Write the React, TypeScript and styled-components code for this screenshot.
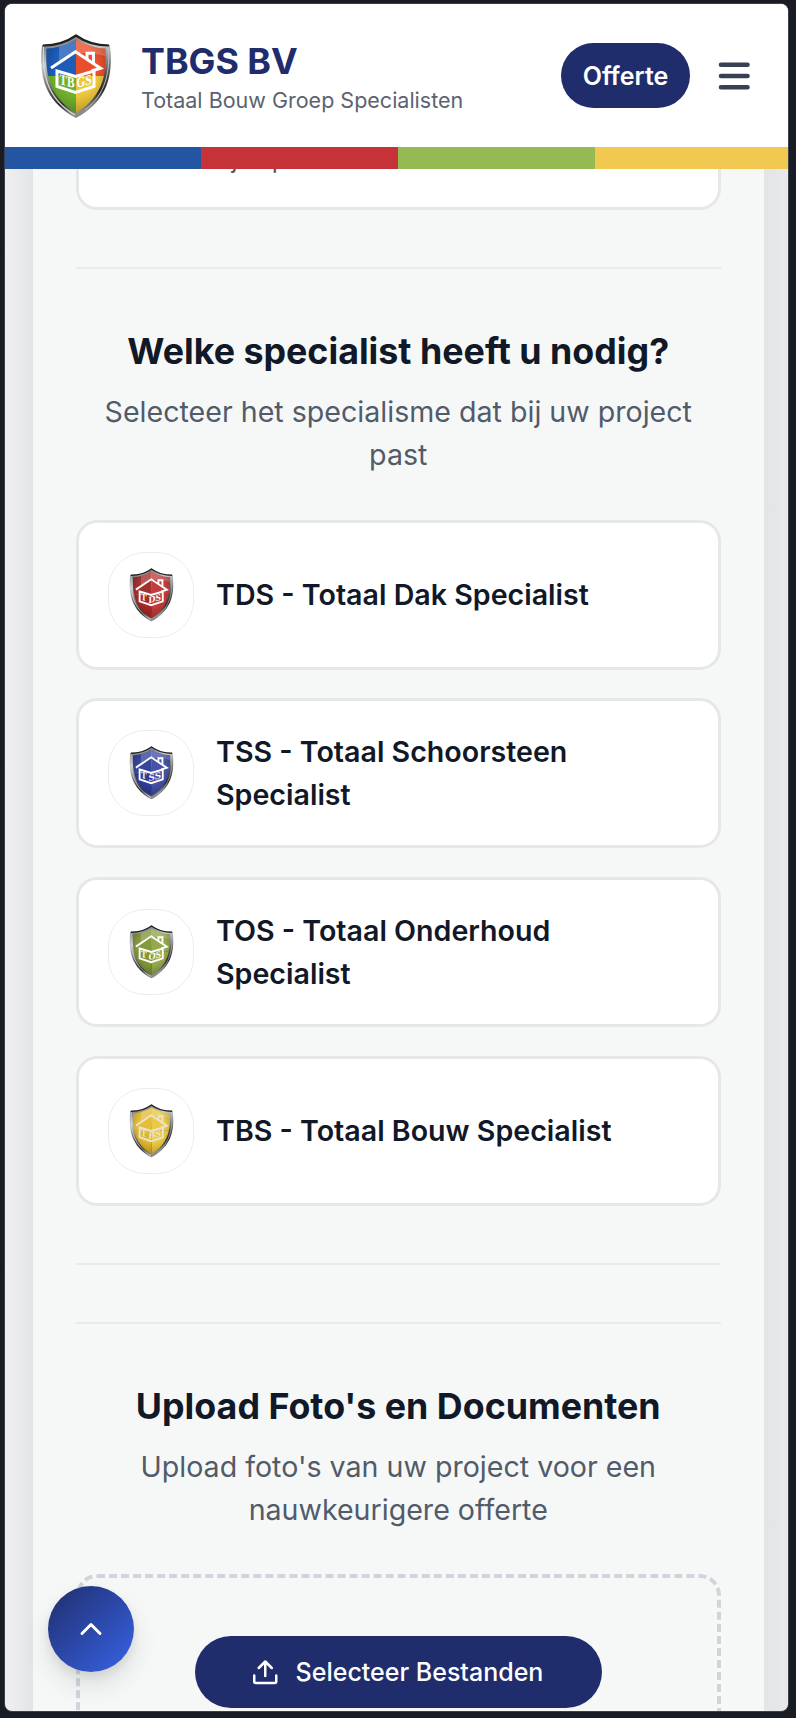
import React from 'react';
import styled, { createGlobalStyle } from 'styled-components';

const Global = createGlobalStyle`
  * { box-sizing: border-box; }
  body { margin: 0; background: #191c24; font-family: Inter, "Liberation Sans", sans-serif; }
  h1, h2, h3, p { margin: 0; }
  button { font: inherit; border: 0; padding: 0; cursor: pointer; }
`;

const Device = styled.div`
  width: 796px;
  height: 1718px;
  padding: 3px 6px 6px 4px;
  overflow: hidden;
`;

const Screen = styled.div`
  position: relative;
  width: 785px;
  height: 1709px;
  border: 1.5px solid #3b404b;
  border-radius: 8px;
  overflow: hidden;
  background: linear-gradient(90deg, #f0f0f2 0, #e3e4e6 28px, #e3e4e6 758px, #e9e9eb 100%);
`;

const Header = styled.header`
  position: relative;
  z-index: 2;
  background: #fff;
`;

const Bar = styled.div`
  height: 143px;
  display: flex;
  align-items: center;
  padding: 0 31px 0 35px;
`;

const Brand = styled.div`
  flex: 1;
  padding: 4px 0 0 29px;
`;

const BrandName = styled.h1`
  font-size: 35.8px;
  line-height: 44px;
  font-weight: 700;
  color: #202c6c;
`;

const Tagline = styled.p`
  font-size: 21.5px;
  line-height: 34px;
  color: #5b6370;
`;

const QuoteButton = styled.button`
  width: 129px;
  height: 65px;
  border-radius: 33px;
  background: #202d6c;
  color: #fff;
  font-size: 25px;
  font-weight: 600;
`;

const MenuButton = styled.button`
  margin-left: 21px;
  width: 46px;
  height: 46px;
  background: none;
`;

const Stripe = styled.div`
  display: grid;
  grid-template-columns: 196px 197px 197px 1fr;
  height: 21.5px;
`;

const StripePart = styled.div<{ $color: string }>`
  background: ${(p) => p.$color};
`;

const Content = styled.main`
  margin: -53.5px 24.5px 0 28px;
  height: 1620px;
  padding: 0 43px;
  background: #f6f8f8;
`;

const Card = styled.div`
  display: flex;
  align-items: center;
  height: 150px;
  padding: 0 28px 0 29px;
  border: 3.5px solid #e5e7eb;
  border-radius: 21px;
  background: #fff;
`;

const PreviousCard = styled(Card)`
  height: 94.5px;
  align-items: flex-start;
  padding: 26px 0 0 88px;
  border-top: 0;
  border-radius: 0 0 21px 21px;
  font-size: 25.1px;
  line-height: 36px;
  color: #4b5563;
`;

const Divider = styled.hr`
  margin: 57px 0 0;
  border: 0;
  height: 2px;
  background: #e8eaed;
`;

const Section = styled.section`
  padding-top: 57.5px;
  text-align: center;
`;

const Title = styled.h2`
  font-size: 35.8px;
  line-height: 50px;
  font-weight: 700;
  color: #111827;
`;

const Lead = styled.p`
  margin-top: 14px;
  font-size: 28.6px;
  line-height: 43px;
  color: #525b69;
`;

const Cards = styled.div`
  display: flex;
  flex-direction: column;
  gap: 28.8px;
  margin-top: 43.6px;
  text-align: left;
`;

const Badge = styled.div`
  flex: none;
  display: grid;
  place-items: center;
  width: 86px;
  height: 86px;
  border: 1.8px solid #e7eef3;
  border-radius: 37px;
`;

const CardLabel = styled.h3`
  padding-left: 22px;
  font-size: 28.6px;
  line-height: 43px;
  font-weight: 600;
  color: #111827;
`;

const DropZone = styled.div`
  display: flex;
  justify-content: center;
  margin-top: 43px;
  height: 240px;
  padding-top: 57.5px;
  border: 4px dashed #d1d5db;
  border-radius: 21px;
`;

const UploadButton = styled.button`
  display: flex;
  align-items: center;
  justify-content: center;
  gap: 18px;
  width: 407px;
  height: 72px;
  border-radius: 36px;
  background: #202d6c;
  color: #fff;
  font-size: 25px;
  font-weight: 500;
`;

const ScrollTop = styled.button`
  position: absolute;
  z-index: 3;
  left: 42.5px;
  bottom: 39.5px;
  width: 86px;
  height: 86px;
  display: grid;
  place-items: center;
  border-radius: 50%;
  background: linear-gradient(135deg, #202d6c, #3764e6);
  box-shadow: 0 14px 28px rgba(0, 0, 0, 0.1), 0 5px 10px rgba(0, 0, 0, 0.08);
`;

const LogoSlot = styled.div`
  display: flex;
  padding-top: 2px;
`;

type Letters = { text: string; x: number; y: number; width: number };

type ShieldProps = {
  id: string;
  width: number;
  height: number;
  colors: [string, string, string, string];
  left: Letters;
  right: Letters;
  ink?: string;
};

const OUTLINE = 'M36 1 C26 8 14 11 2 11 C-1 40 3 66 36 84 C69 66 73 40 70 11 C58 11 46 8 36 1Z';
const FACE = 'M36 5 C27 11 17 14 6.500 14.500 C5 39 9 63 36 79 C63 63 67 39 65.500 14.500 C55 14 45 11 36 5Z';

function Shield({ id, width, height, colors, left, right, ink = '#fff' }: ShieldProps) {
  const [tl, tr, bl, br] = colors;
  return (
    <svg width={width} height={height} viewBox="0 0 72 85" preserveAspectRatio="none">
      <defs>
        <linearGradient id={`${id}-rim`} x1="0" y1="0" x2="0.3" y2="1">
          <stop offset="0" stopColor="#171717" />
          <stop offset="0.12" stopColor="#77797a" />
          <stop offset="0.35" stopColor="#c9cbcc" />
          <stop offset="0.7" stopColor="#4c4c4c" />
          <stop offset="0.85" stopColor="#292929" />
          <stop offset="1" stopColor="#8b8b8b" />
        </linearGradient>
        <radialGradient id={`${id}-shade`} cx="0.5" cy="0.42" r="0.62">
          <stop offset="0.5" stopColor="#000" stopOpacity="0" />
          <stop offset="1" stopColor="#000" stopOpacity="0.34" />
        </radialGradient>
        <clipPath id={`${id}-clip`}>
          <path d={FACE} />
        </clipPath>
      </defs>
      <path d={OUTLINE} fill={`url(#${id}-rim)`} />
      <path d="M3.500 12.500 C2 38 6 64 35 81" fill="none" stroke="#d4d6d8" strokeWidth="1.200" />
      <path d="M68.500 13 C70 38 66 60 45 76" fill="none" stroke="#c4c6c8" strokeWidth="0.900" />
      <path d="M3 11.500 C15 11.500 27 8 36 1.500 C45 8 57 11.500 69 11.500" fill="none" stroke="#202122" strokeWidth="2.200" />
      <g clipPath={`url(#${id}-clip)`}>
        <rect width="36" height="42" fill={tl} />
        <rect x="36" width="36" height="42" fill={tr} />
        <rect y="42" width="36" height="43" fill={bl} />
        <rect x="36" y="42" width="36" height="43" fill={br} />
        <path d="M19 0 H72 V25 C58 18 32 15 19 28Z" fill="#fff" opacity="0.2" />
        <rect width="72" height="85" fill={`url(#${id}-shade)`} />
      </g>
      <g fill="none" stroke={ink} strokeWidth="3">
        <path d="M11 34 L35.500 17.800 L60.500 34.300 L51.500 37" />
        <path d="M47 25 V19.200 H53.500 V29.500" />
        <path d="M17 37 L35.500 42.500 L54 37 V52.500 L35.500 58.500 L17 52.500Z" />
      </g>
      <g fill={ink} fontFamily="Liberation Serif, serif" fontWeight="700" fontSize="15" textAnchor="middle">
        <text transform={`translate(${left.x} ${left.y}) skewY(15)`} textLength={left.width} lengthAdjust="spacingAndGlyphs">{left.text}</text>
        <text transform={`translate(${right.x} ${right.y}) skewY(-15)`} textLength={right.width} lengthAdjust="spacingAndGlyphs">{right.text}</text>
      </g>
    </svg>
  );
}

type Specialist = { id: string; label: string; suffix: string; ink?: string; colors: ShieldProps['colors'] };

const specialists: Specialist[] = [
  { id: 'tds', label: 'TDS - Totaal Dak Specialist', suffix: 'DS', colors: ['#a33030', '#c23e3e', '#a82827', '#c23a3a'] },
  { id: 'tss', label: 'TSS - Totaal Schoorsteen Specialist', suffix: 'SS', colors: ['#36459a', '#4653a8', '#2e3c96', '#4350a4'] },
  { id: 'tos', label: 'TOS - Totaal Onderhoud Specialist', suffix: 'OS', colors: ['#84983f', '#93a94c', '#7e9538', '#94aa4a'] },
  { id: 'tbs', label: 'TBS - Totaal Bouw Specialist', suffix: 'BS', ink: '#ebe4cc', colors: ['#e3be36', '#e9c945', '#dfb52c', '#ebca42'] },
];

export default function App() {
  return (
    <Device>
      <Global />
      <Screen>
        <Header>
          <Bar>
            <LogoSlot>
              <Shield
                id="tbgs"
                width={72}
                height={85}
                left={{ text: 'TB', x: 27, y: 52, width: 15 }}
                right={{ text: 'GS', x: 44, y: 52, width: 15 }}
                colors={['#1d5cb8', '#e94f2c', '#70b12c', '#eec73c']}
              />
            </LogoSlot>
            <Brand>
              <BrandName>TBGS BV</BrandName>
              <Tagline>Totaal Bouw Groep Specialisten</Tagline>
            </Brand>
            <QuoteButton>Offerte</QuoteButton>
            <MenuButton aria-label="Menu">
              <svg width="46" height="46" viewBox="0 0 46 46" fill="none" stroke="#374151" strokeWidth="4.600" strokeLinecap="round">
                <path d="M10 11.800h26.500M10 23h26.500M10 34.200h26.500" />
              </svg>
            </MenuButton>
          </Bar>
          <Stripe>
            <StripePart $color="#2355a3" />
            <StripePart $color="#c53338" />
            <StripePart $color="#95b953" />
            <StripePart $color="#f1c950" />
          </Stripe>
        </Header>
        <Content>
          <PreviousCard>Jaarlijks preventief onderhoud</PreviousCard>
          <Divider />
          <Section>
            <Title>Welke specialist heeft u nodig?</Title>
            <Lead>Selecteer het specialisme dat bij uw project past</Lead>
            <Cards>
              {specialists.map((s) => (
                <Card key={s.id}>
                  <Badge>
                    <Shield
                      id={s.id}
                      width={45}
                      height={54}
                      left={{ text: 'T', x: 23.5, y: 51, width: 9 }}
                      right={{ text: s.suffix, x: 41, y: 53, width: 20 }}
                      colors={s.colors}
                      ink={s.ink}
                    />
                  </Badge>
                  <CardLabel>{s.label}</CardLabel>
                </Card>
              ))}
            </Cards>
          </Section>
          <Divider />
          <Divider />
          <Section>
            <Title>Upload Foto's en Documenten</Title>
            <Lead>Upload foto's van uw project voor een nauwkeurigere offerte</Lead>
            <DropZone>
              <UploadButton>
                <svg width="24.5" height="36" viewBox="5.750 0 24.500 36" fill="none" stroke="#fff" strokeWidth="2.500" strokeLinecap="round" strokeLinejoin="round">
                  <path d="M7 21.500V27.500a1.500 1.500 0 0 0 1.500 1.500h19a1.500 1.500 0 0 0 1.500-1.500V21.500M18 22V7.500M11.500 14L18 7.500l6.500 6.500" />
                </svg>
                Selecteer Bestanden
              </UploadButton>
            </DropZone>
          </Section>
        </Content>
        <ScrollTop aria-label="Naar boven">
          <svg width="28" height="20" viewBox="0 0 28 20" fill="none" stroke="#fff" strokeWidth="3" strokeLinecap="round" strokeLinejoin="round">
            <path d="M5 14.500l9-9 9 9" />
          </svg>
        </ScrollTop>
      </Screen>
    </Device>
  );
}
